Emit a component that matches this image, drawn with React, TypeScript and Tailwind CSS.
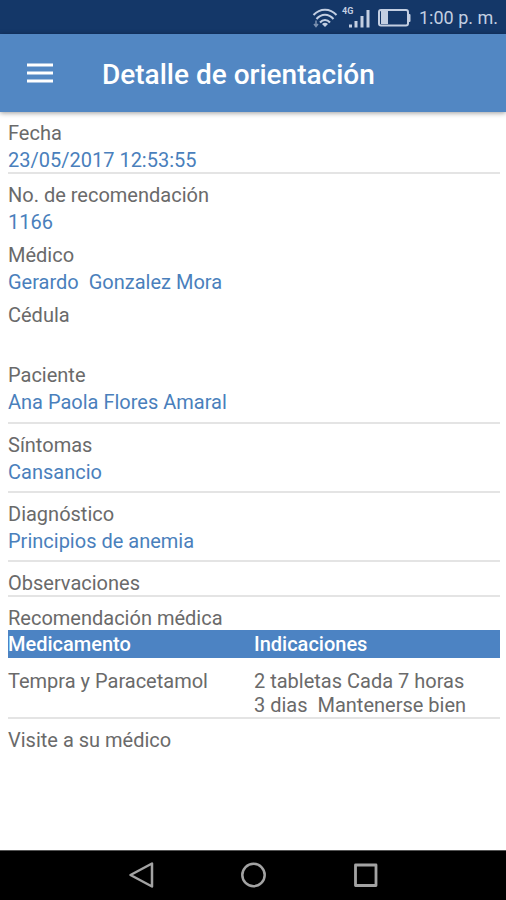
type FieldProps = { label: string; value?: string };

const divider = 'border-b-2 border-[#e4e4e4]';

const medicamentos = [
  {
    nombre: 'Tempra y Paracetamol',
    indicaciones: ['2 tabletas Cada 7 horas', '3 dias  Mantenerse bien'],
  },
];

function Field({ label, value = '' }: FieldProps) {
  return (
    <div className="flex flex-col gap-[3px] pt-[9px]">
      <dt>{label}</dt>
      <dd className="min-h-6 whitespace-pre-wrap text-[#4a7fbc]">{value}</dd>
    </div>
  );
}

function StatusBar() {
  return (
    <div className="flex h-[34px] items-center justify-end bg-[#143768] pr-2 pt-px text-[#c3cfe2]">
      <svg className="mr-1" width="26" height="20" viewBox="0 0 26 20" fill="none" stroke="currentColor" strokeWidth="2">
        <path d="M1.500 7C8 0 18 0 24.500 7" />
        <path d="M4.500 11C9.500 5.300 16.500 5.300 21.500 11" />
        <path d="M8 14.500C11 11 15 11 18 14.500" />
        <path d="M13 19L10 16Q13 13.500 16 16Z" fill="currentColor" stroke="none" />
        <path d="M4 12.500v6M2 16l2 2.500L6 16" strokeWidth="1.500" opacity="0.6" />
      </svg>
      <div className="relative mr-2 h-6 w-7">
        <span className="absolute left-0 top-0 text-[9px] leading-[10px] font-bold">4G</span>
        <svg width="28" height="24" viewBox="0 0 28 24" fill="currentColor">
          <path d="M7 18.500h3v3H7zM12.500 15h3v6.500h-3zM18.500 10h3v11.500h-3zM24.500 4h3v17.500h-3z" />
        </svg>
      </div>
      <svg className="mr-2" width="33" height="18" viewBox="0 0 33 18">
        <rect x="1" y="1" width="29" height="15.500" rx="2" fill="none" stroke="currentColor" strokeWidth="2" />
        <rect x="3" y="2" width="7" height="13" fill="currentColor" />
        <path d="M30 5h1.500q1 0 1 1v6q0 1-1 1H30z" fill="currentColor" />
      </svg>
      <span className="text-[18px] leading-6">1:00 p. m.</span>
    </div>
  );
}

function NavBar() {
  return (
    <nav className="flex h-[50px] justify-center border-t border-[#555555] bg-black text-[#a3a3a3]">
      <div className="flex w-2/3">
        <button type="button" aria-label="Atrás" className="flex flex-1 items-center justify-center">
          <svg width="28" height="28" viewBox="0 0 28 28" fill="none" stroke="currentColor" strokeWidth="2.500" strokeLinejoin="round">
            <path d="M3.500 13L25 1.500V24.500Z" />
          </svg>
        </button>
        <button type="button" aria-label="Inicio" className="flex flex-1 items-center justify-center">
          <svg width="28" height="28" viewBox="0 0 28 28" fill="none" stroke="currentColor" strokeWidth="2.500">
            <circle cx="14.500" cy="13" r="11.200" />
          </svg>
        </button>
        <button type="button" aria-label="Recientes" className="flex flex-1 items-center justify-center">
          <svg width="28" height="28" viewBox="0 0 28 28" fill="none" stroke="currentColor" strokeWidth="2.800" strokeLinejoin="round">
            <rect x="4.500" y="3" width="20.500" height="20.500" />
          </svg>
        </button>
      </div>
    </nav>
  );
}

export default function App() {
  return (
    <div className="flex min-h-screen flex-col bg-white font-['Roboto',sans-serif] text-[20px] leading-6 text-[#6a6a6a]">
      <StatusBar />
      <header className="flex h-[78px] items-center bg-[#5287c3] pl-6 text-white shadow-[0_1px_5px_rgba(0,0,0,0.4)]">
        <button type="button" aria-label="Menú" className="mr-[46px]">
          <svg width="32" height="24" viewBox="0 0 32 24" fill="currentColor">
            <path d="M3 2.500h26v3H3zM3 10.500h26v3H3zM3 18.500h26v3H3z" />
          </svg>
        </button>
        <h1 className="pt-1 text-[28px] leading-8 font-medium">Detalle de orientación</h1>
      </header>

      <main className="flex-1 pb-2 pl-2 pr-1.5">
        <dl className={divider}>
          <Field label="Fecha" value="23/05/2017 12:53:55" />
        </dl>
        <dl className={`pb-2 ${divider}`}>
          <Field label="No. de recomendación" value="1166" />
          <Field label="Médico" value="Gerardo  Gonzalez Mora" />
          <Field label="Cédula" />
          <Field label="Paciente" value="Ana Paola Flores Amaral" />
        </dl>
        <dl className={`pb-[7px] ${divider}`}>
          <Field label="Síntomas" value="Cansancio" />
        </dl>
        <dl className={`pb-[7px] ${divider}`}>
          <Field label="Diagnóstico" value="Principios de anemia" />
        </dl>
        <h2 className={`pt-[9px] ${divider}`}>Observaciones</h2>
        <h2 id="recomendacion" className="pt-[9px]">Recomendación médica</h2>
        <table aria-labelledby="recomendacion" className="w-full table-fixed text-left">
          <thead className="bg-[#4c83c3] text-white">
            <tr className="h-7">
              <th className="p-0 font-medium">Medicamento</th>
              <th className="p-0 font-medium">Indicaciones</th>
            </tr>
          </thead>
          <tbody>
            {medicamentos.map((m) => (
              <tr key={m.nombre} className={`align-top ${divider}`}>
                <td className="pt-[11px]">{m.nombre}</td>
                <td className="pt-[11px] whitespace-pre-wrap">{m.indicaciones.join('\n')}</td>
              </tr>
            ))}
          </tbody>
        </table>
        <p className="pt-[9px]">Visite a su médico</p>
      </main>

      <NavBar />
    </div>
  );
}
